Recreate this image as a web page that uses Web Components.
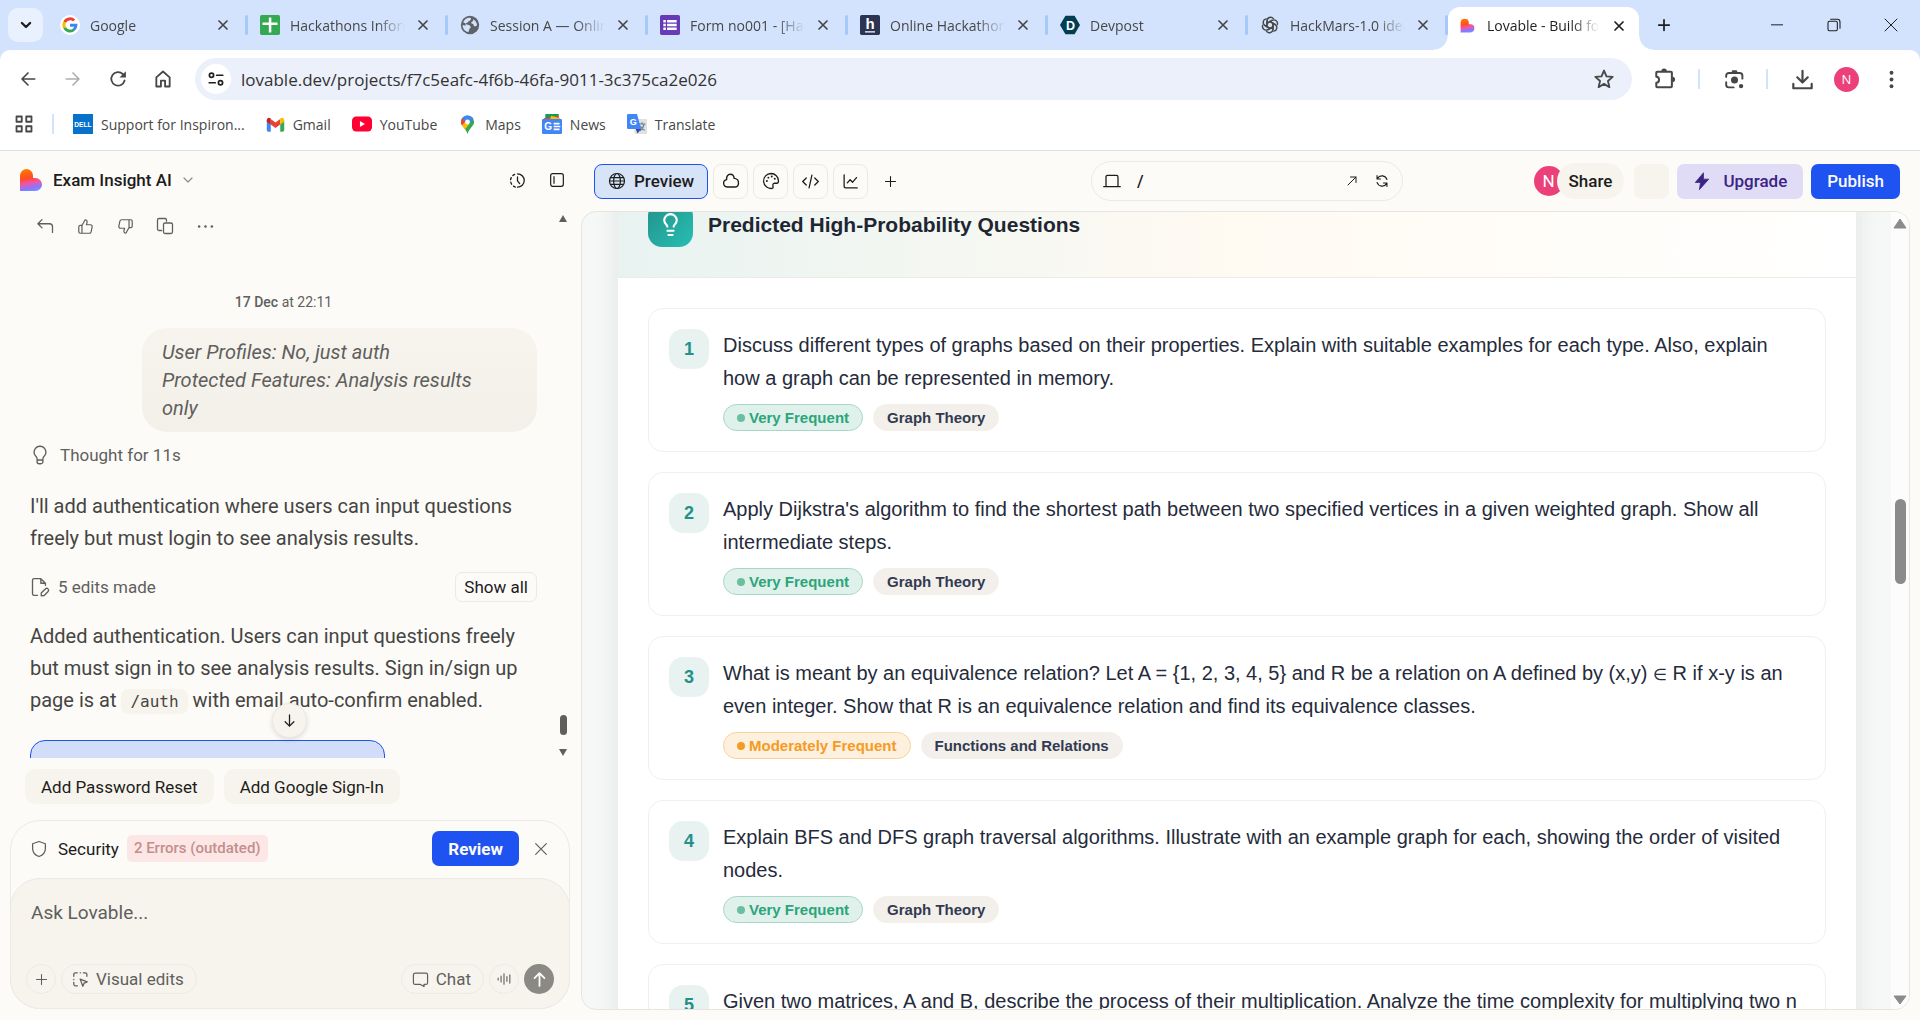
<!DOCTYPE html>
<html lang="en">
<head>
<meta charset="utf-8">
<title>Lovable - Build for the web 20x faster</title>
<style>
  html, body {
    margin: 0;
    height: 100%;
  }
  body {
    display: flex;
    flex-direction: column;
    overflow: hidden;
    background: #fcfbf8;
    font-family: Roboto, "Liberation Sans", sans-serif;
    color: #1c1c1c;
  }
  app-workspace {
    flex: 1;
    min-height: 0;
  }
</style>
</head>
<body>
<browser-tabs>
  <browser-tab icon="google" label="Google"></browser-tab>
  <browser-tab icon="sheets" label="Hackathons Information"></browser-tab>
  <browser-tab icon="globe-dark" label="Session A — Online Session"></browser-tab>
  <browser-tab icon="forms" label="Form no001 - [Hackathon]"></browser-tab>
  <browser-tab icon="hackerearth" label="Online Hackathons"></browser-tab>
  <browser-tab icon="devpost" label="Devpost"></browser-tab>
  <browser-tab icon="openai" label="HackMars-1.0 ideas"></browser-tab>
  <browser-tab icon="lovable" label="Lovable - Build for web" active></browser-tab>
</browser-tabs>
<browser-toolbar></browser-toolbar>
<bookmarks-bar></bookmarks-bar>
<app-workspace></app-workspace>

<script>
const line = (body, width = 2) =>
  `<g fill="none" stroke="currentColor" stroke-width="${width}" stroke-linecap="round" stroke-linejoin="round">${body}</g>`;

const lovableHeart = (id) => `
  <defs>
    <linearGradient id="${id}" x1="0.35" y1="0" x2="0.55" y2="1">
      <stop offset="0" stop-color="#ff7a00"/>
      <stop offset="0.4" stop-color="#ff4a26"/>
      <stop offset="0.62" stop-color="#f455a0"/>
      <stop offset="0.85" stop-color="#8a75ff"/>
      <stop offset="1" stop-color="#7b8cff"/>
    </linearGradient>
  </defs>
  <path fill="url(#${id})" d="M1 7.500a6.500 6.500 0 0 1 13 0V10h2.500a6.500 6.500 0 0 1 0 13H1z"/>`;

// all icons share a 24x24 grid
const ICONS = {
  'chevron-down': line('<path d="M4 8l8 8 8-8"/>', 2.4),
  'chevron-bold': line('<path d="M5 8.500l7 7 7-7"/>', 4),
  'close': line('<path d="M4 4l16 16M20 4L4 20"/>', 1.8),
  'close-bold': line('<path d="M4 4l16 16M20 4L4 20"/>', 3.400),
  'plus': line('<path d="M12 4v16M4 12h16"/>', 1.7),
  'plus-bold': line('<path d="M12 3v18M3 12h18"/>', 3),
  'minimize': '<path fill="currentColor" d="M3 11h18v1.500H3z"/>',
  'restore': line('<rect x="3" y="6.500" width="14" height="14" rx="2"/><path d="M7 3.500h10a4 4 0 0 1 4 4V17"/>', 1.6),
  'window-close': line('<path d="M3 3l18 18M21 3L3 21"/>', 1.5),
  'back': line('<path d="M21 12H4M12 4l-8 8 8 8"/>', 2.2),
  'forward': line('<path d="M3 12h17M12 4l8 8-8 8"/>', 2.2),
  'reload': line('<path d="M20.800 14A9 9 0 1 1 18.500 5.500L21 8"/>', 2.4) + '<path fill="currentColor" d="M22.500 1.500V10H14z"/>',
  'home': line('<path d="M4 21V10l8-7 8 7v11h-5.500v-7h-5v7z"/>', 2.2),
  'site-info': line('<circle cx="6" cy="7" r="2.800"/><path d="M13 7h8M3 17h8"/><circle cx="18" cy="17" r="2.800"/>', 2.3),
  'star': line('<path d="M12 2.800l2.700 6.300 6.800.6-5.200 4.500 1.600 6.700L12 17.300l-5.900 3.600 1.600-6.700L2.500 9.700l6.800-.6z"/>', 2),
  'extension': line('<path d="M3.500 4h15a1 1 0 0 1 1 1v15a1 1 0 0 1-1 1h-15a1 1 0 0 1-1-1v-4c2 0 3-1.300 3-3.200S4.500 9.500 2.500 9.500V5a1 1 0 0 1 1-1z"/>', 2.2) + '<path fill="currentColor" d="M8 3.500a3 3 0 0 1 6 0zM20 9.500a3 3 0 0 1 0 6z"/>',
  'lens': line('<path d="M2.500 9V7.500a3 3 0 0 1 3-3H18a3 3 0 0 1 3 3V11M2.500 15v3a3 3 0 0 0 3 3H11"/>', 2.2) + '<path fill="currentColor" d="M8.500 4l1-2.500h5l1 2.500z"/><circle fill="currentColor" cx="12" cy="12.500" r="4"/><circle fill="currentColor" cx="19.500" cy="19.500" r="2.500"/>',
  'download': line('<path d="M12 2v13M6 9.500l6 6 6-6M1.500 17v5h21v-5"/>', 2.5),
  'dots-vertical': '<g fill="currentColor"><circle cx="12" cy="3.500" r="2.400"/><circle cx="12" cy="12" r="2.400"/><circle cx="12" cy="20.500" r="2.400"/></g>',
  'apps': line('<rect x="2" y="2" width="7" height="7"/><rect x="15" y="2" width="7" height="7"/><rect x="2" y="15" width="7" height="7"/><rect x="15" y="15" width="7" height="7"/>', 2.4),

  'google': `<circle cx="12" cy="12" r="12" fill="#fff"/>
    <g fill="none" stroke-width="3.600">
      <path stroke="#ea4335" d="M17 6.600A7.200 7.200 0 0 0 5.600 8.600"/>
      <path stroke="#fbbc05" d="M5.700 8.400a7.200 7.200 0 0 0 0 7.200"/>
      <path stroke="#34a853" d="M5.600 15.400a7.200 7.200 0 0 0 11.200 2"/>
      <path stroke="#4285f4" d="M16.600 17.600a7 7 0 0 0 2.500-5.400H12"/>
    </g>`,
  'sheets': '<rect width="24" height="24" rx="2" fill="#34a853"/><path fill="#fff" d="M10.600 3h3v6H21v3h-7.400v9h-3v-9H3V9h7.600z"/>',
  'globe-dark': '<circle cx="12" cy="12" r="11" fill="#5f6368"/><path fill="#d3e3fd" d="M13 3.500c1 2-1 3-2.500 4S9 10 7 10c0 2 3 1.500 4.500 2.500s2 2.500.5 3.500-1 3.500-2 4.500C5 19.500 3 15.500 3.200 12l3.300 1 .5-2.500-3.200-2C5.500 5 9 2.500 13 3.500zM15.500 5c2.500 1 5 4 5 7.500-1.500.5-2 1.500-3.500 1-1-.5 0-2.500-2-3s-2-2-.5-2.500 1.500-1.500 1-3z"/>',
  'forms': '<rect width="24" height="24" rx="2" fill="#673ab7"/><path fill="#fff" d="M4 6h3v3H4zM8.500 6H20v3H8.500zM4 10.500h3v3H4zM8.500 10.500H20v3H8.500zM4 15h3v3H4zM8.500 15H20v3H8.500z"/>',
  'hackerearth': '<rect width="24" height="24" rx="2" fill="#2c3454"/><text x="12" y="16.500" text-anchor="middle" font-family="Liberation Sans" font-size="18" font-weight="700" fill="#fff">h</text><path fill="#fff" d="M6 19.500h12v1.500H6z"/>',
  'devpost': '<path fill="#003e54" d="M6.500 1h11L24 12l-6.500 11h-11L0 12z"/><text x="12.500" y="17.500" text-anchor="middle" font-family="Liberation Sans" font-size="15" font-weight="700" fill="#fff">D</text>',
  'openai': line([0, 60, 120, 180, 240, 300].map(a => `<path transform="rotate(${a} 12 12)" d="M8.500 14.200V7a4.300 4.300 0 0 1 7.600-2.700M8.500 9.700l5.800-3.400"/>`).join(''), 1.7),
  'lovable': lovableHeart('heart'),
  'dell': '<rect width="24" height="24" fill="#0672cb"/><text x="12" y="15" text-anchor="middle" font-family="Liberation Sans" font-size="8" font-weight="700" fill="#fff">DELL</text>',
  'gmail': '<path fill="#4285f4" d="M1 7v12a2 2 0 0 0 2 2h3V11z"/><path fill="#34a853" d="M23 7v12a2 2 0 0 1-2 2h-3V11z"/><path fill="#ea4335" d="M6 5v7l6 4.500 6-4.500V5l-6 4.500z"/><path fill="#c5221f" d="M1 6.500c0-3 3-4 5-2V12L1 8.500z"/><path fill="#fbbc04" d="M23 6.500c0-3-3-4-5-2V12l5-3.500z"/>',
  'youtube': '<rect y="3" width="24" height="18" rx="5" fill="#f03"/><path fill="#fff" d="M9.500 8.500v7l6-3.500z"/>',
  'maps': `<clipPath id="pin"><path d="M12 .5a8.300 8.300 0 0 1 8.300 8.300c0 5.200-6.300 7.700-8.300 15.200-2-7.500-8.300-10-8.300-15.200A8.300 8.300 0 0 1 12 .5z"/></clipPath>
    <g clip-path="url(#pin)">
      <path fill="#34a853" d="M0 0h24v24H0z"/>
      <path fill="#fbbc04" d="M3 15L9.500 6.500l5 5L7.500 20z"/>
      <path fill="#ea4335" d="M0 2l6 1.500 4 4L3.500 14.500 0 13z"/>
      <path fill="#4285f4" d="M5 4L9 0h11v4.500L14 11 9.500 8z"/>
    </g>
    <circle cx="12" cy="8.800" r="3.100" fill="#fff"/>`,
  'news': '<path fill="#0c9d58" d="M4 0h16v8H4z"/><path fill="#ea4335" d="M2 5l18-3 1 6H3z"/><path fill="#fbbc04" d="M11 2l11 3-1 4H9z"/><rect y="6" width="24" height="18" rx="1.500" fill="#4285f4"/><text x="7.500" y="19" text-anchor="middle" font-family="Liberation Sans" font-size="12" font-weight="700" fill="#fff">G</text><path fill="#fff" d="M14 10.500h7v2h-7zM14 14h8v2h-8zM14 17.500h7v2h-7z"/>',
  'translate': '<rect x="9" y="6" width="15" height="18" rx="1.500" fill="#e0e0e0"/><path d="M14 12h8M18 10v2M15.500 20c3-2 4.500-4.500 5-8M16 14.500c1 2 3 4 5 5" stroke="#607d8b" stroke-width="1.400" fill="none"/><path fill="#4285f4" d="M1.500 0H12l5 18H1.500A1.500 1.500 0 0 1 0 16.500v-15A1.500 1.500 0 0 1 1.500 0z"/><path fill="#3547b0" d="M10.500 18H17l-4.500 5.500z"/><text x="7.500" y="13" text-anchor="middle" font-family="Liberation Sans" font-size="11" font-weight="700" fill="#fff">G</text>',

  'history': line('<path d="M12 2.500a9.500 9.500 0 0 1 0 19M12 7v5.500l3 4"/><path stroke-dasharray="3 3.600" d="M9 21.200A9.500 9.500 0 0 1 9 3"/>', 1.8),
  'sidebar': line('<rect x="2.500" y="2.500" width="19" height="19" rx="3"/><path d="M7.500 7v10"/>', 1.8),
  'undo': line('<path d="M8 3.500L2.500 9 8 14.500M2.500 9H18a4 4 0 0 1 4 4v7.500"/>', 1.7),
  'thumb-up': line('<path d="M7 10.500v11H4.500a2 2 0 0 1-2-2v-7a2 2 0 0 1 2-2zM7 10.500l4.500-8a3 3 0 0 1 2.700 3.800L13.300 9.500H19a2.500 2.500 0 0 1 2.400 3l-1.500 7a2.500 2.500 0 0 1-2.400 2H7"/>', 1.7),
  'thumb-down': line('<path d="M17 13.500v-11h2.500a2 2 0 0 1 2 2v7a2 2 0 0 1-2 2zM17 13.500l-4.500 8a3 3 0 0 1-2.700-3.800l.9-3.200H5a2.500 2.500 0 0 1-2.400-3l1.500-7a2.500 2.500 0 0 1 2.400-2H17"/>', 1.7),
  'copy': line('<rect x="10" y="8" width="12" height="14" rx="2"/><path d="M7.500 18H4a2 2 0 0 1-2-2V4a2 2 0 0 1 2-2h8a2 2 0 0 1 2 2v1.500"/>', 1.7),
  'dots': '<g fill="currentColor"><circle cx="3" cy="12" r="1.800"/><circle cx="12" cy="12" r="1.800"/><circle cx="21" cy="12" r="1.800"/></g>',
  'bulb': line('<path d="M8.500 18v-1.500c0-1.500-.8-2.200-1.800-3.400A7 7 0 0 1 12 1.500a7 7 0 0 1 5.300 11.600c-1 1.200-1.800 1.900-1.800 3.400V18zM8.500 18v2a2.500 2.500 0 0 0 2.500 2.500h2a2.500 2.500 0 0 0 2.500-2.500v-2"/>', 1.6),
  'bulb-tile': line('<path d="M15 14c.2-1 .7-1.700 1.500-2.500A5.800 5.800 0 0 0 18 8 6 6 0 0 0 6 8c0 1 .2 2.200 1.500 3.500.7.700 1.300 1.500 1.500 2.500M9 18h6M10 22h4"/>', 2),
  'file-edit': line('<path d="M9 22H5a2 2 0 0 1-2-2V4a2 2 0 0 1 2-2h8l5.500 5.500V10M13 2v5.500h5.500"/><path d="M13.500 22.500v-3.200l5-5a2.200 2.200 0 0 1 3.200 3.100l-5 5z"/>', 1.6),
  'arrow-down': line('<path d="M12 3v18M5 14l7 7 7-7"/>', 2),
  'arrow-up': line('<path d="M12 21V3M5 10l7-7 7 7"/>', 2.6),
  'shield': line('<path d="M12 2l8.500 3v6.500c0 5-3.500 8.500-8.500 10.500-5-2-8.500-5.500-8.500-10.500V5z"/>', 1.7),
  'select': line('<path d="M2.500 7.500V5A2.500 2.500 0 0 1 5 2.500h2.500M16 2.500h2.500A2.500 2.500 0 0 1 21 5v2.500M2.500 16v2.500A2.500 2.500 0 0 0 5 21h2.500M11.500 2.500h.5M2.500 11.700v.5M11.500 11.500l10 3.800-4.300 1.800-1.900 4.400z"/>', 1.8),
  'chat': line('<path d="M4.500 3h15A2.500 2.500 0 0 1 22 5.500v11a2.500 2.500 0 0 1-2.500 2.500H17v3l-5-3H4.500A2.500 2.500 0 0 1 2 16.500v-11A2.500 2.500 0 0 1 4.500 3z"/>', 1.7),
  'wave': line('<path d="M2 10.500v3M7 7v10M12 3v18M17 8v8M22 5v14"/>', 1.9),
  'globe': line('<circle cx="12" cy="12" r="10"/><ellipse cx="12" cy="12" rx="4.500" ry="10"/><path d="M3.500 7.500h17M3.500 16.500h17M2 12h20"/>', 1.6),
  'cloud': line('<path d="M7 20a5 5 0 0 1-.8-9.900C5.500 6 8 3 11 3c3.200 0 5 2.400 5.200 5.500C20 8.500 22 11.500 22 14.500 22 17.500 20 20 17 20z"/>', 1.8),
  'palette': line('<path d="M12 2a10 10 0 1 0 1.500 19.900c2-.4 1.200-2.600 1-3.600-.4-2 .7-3.300 2.700-3.300h2.300c1.600 0 2.500-1 2.500-3A10 10 0 0 0 12 2z"/>', 1.7) + '<g fill="currentColor"><circle cx="6.500" cy="12" r="1.300"/><circle cx="8.500" cy="7.500" r="1.300"/><circle cx="13" cy="6" r="1.300"/><circle cx="17" cy="9" r="1.300"/></g>',
  'code': line('<path d="M6 7l-5 5 5 5M18 7l5 5-5 5M14 3l-4 18"/>', 1.8),
  'chart': line('<path d="M3 2.500V19a2 2 0 0 0 2 2h16.500M7.500 14l4-4.500 3.500 3.500 5.500-6.500"/>', 1.8),
  'laptop': line('<path d="M4 19V6.500a2 2 0 0 1 2-2h12a2 2 0 0 1 2 2V19M1 19.500h22"/>', 1.7),
  'arrow-out': line('<path d="M4 20L20 4M9 4h11v11"/>', 2),
  'refresh': line('<path d="M20.500 9.500A9 9 0 0 0 4.200 7.500M3.500 2.500v6h6M3.500 14.500a9 9 0 0 0 16.300 2M20.500 21.500v-6h-6"/>', 1.9),
  'bolt': '<path fill="currentColor" stroke="currentColor" stroke-linejoin="round" d="M14 1L3 14h7l-1.500 9.500L21 9.500h-7z"/>'
};

class UiIcon extends HTMLElement {
  connectedCallback() {
    const size = this.getAttribute('size') || 20;
    this.attachShadow({ mode: 'open' });
    this.shadowRoot.innerHTML = `
      <style>
        :host { display: inline-flex; flex: none; }
        svg { display: block; overflow: visible; }
      </style>
      <svg width="${size}" height="${size}" viewBox="0 0 24 24" aria-hidden="true">${ICONS[this.getAttribute('name')] || ''}</svg>
    `;
  }
}
customElements.define('ui-icon', UiIcon);

// shared reset for buttons and inputs inside each shadow root
const RESET = `
  *, *::before { box-sizing: border-box; }
  button {
    display: inline-flex;
    align-items: center;
    justify-content: center;
    margin: 0;
    padding: 0;
    border: 0;
    background: none;
    color: inherit;
    font: inherit;
    white-space: nowrap;
    cursor: pointer;
  }
  input, textarea {
    min-width: 0;
    margin: 0;
    padding: 0;
    border: 0;
    outline: 0;
    background: none;
    font: inherit;
    color: inherit;
  }
`;

class BrowserTabs extends HTMLElement {
  connectedCallback() {
    this.attachShadow({ mode: 'open' });
    this.shadowRoot.innerHTML = `
      <style>
        ${RESET}
        :host {
          display: flex;
          height: 50px;
          padding-left: 8px;
          box-sizing: border-box;
          background: #d3e3fd;
          color: #1f1f1f;
          font-family: "Open Sans", sans-serif;
        }
        .search {
          width: 35px;
          height: 34px;
          margin: 8px 5px 0 0;
          border-radius: 10px;
          background: #e9f0fe;
        }
        .tabs { display: flex; }
        .new { width: 36px; height: 50px; margin-left: 7px; }
        .controls { display: flex; margin-left: auto; padding-right: 1px; }
        .controls button { width: 57px; height: 50px; }
      </style>
      <button class="search" aria-label="Search tabs"><ui-icon name="chevron-bold" size="14"></ui-icon></button>
      <div class="tabs"><slot></slot></div>
      <button class="new" aria-label="New tab"><ui-icon name="plus-bold" size="14"></ui-icon></button>
      <div class="controls">
        <button aria-label="Minimise"><ui-icon name="minimize" size="16"></ui-icon></button>
        <button aria-label="Restore"><ui-icon name="restore" size="16"></ui-icon></button>
        <button aria-label="Close window"><ui-icon name="window-close" size="16"></ui-icon></button>
      </div>
    `;
  }
}
customElements.define('browser-tabs', BrowserTabs);

class BrowserTab extends HTMLElement {
  connectedCallback() {
    this.attachShadow({ mode: 'open' });
    this.shadowRoot.innerHTML = `
      <style>
        ${RESET}
        :host {
          position: relative;
          display: flex;
          align-items: center;
          width: 200px;
          height: 50px;
          padding: 0 15px 0 12px;
          box-sizing: border-box;
          color: #474747;
        }
        :host(:not([active]))::after {
          content: "";
          width: 3px;
          height: 20px;
          border-radius: 2px;
          background: #a8c7fa;
          margin: 0 -15px 0 12px;
        }
        .label {
          flex: 1;
          min-width: 0;
          margin: 0 8px 0 10px;
          overflow: hidden;
          white-space: nowrap;
          font-size: 14px;
          -webkit-mask-image: linear-gradient(90deg, #000 75%, transparent);
          mask-image: linear-gradient(90deg, #000 75%, transparent);
        }
        button { width: 20px; height: 20px; }
        :host([active]) {
          width: 191px;
          height: 43px;
          margin-top: 7px;
          padding: 0 10px 6px 12px;
          border-radius: 12px 12px 0 0;
          background: #fff;
          color: #1f1f1f;
        }
        :host([active]) .label { margin: 0 10px 0 12px; }
        .curve { display: none; }
        :host([active]) .curve {
          display: block;
          position: absolute;
          bottom: 0;
          width: 14px;
          height: 14px;
        }
        .left { right: 100%; background: radial-gradient(circle at 0 0, transparent 13px, #fff 14px); }
        .right { left: 100%; background: radial-gradient(circle at 100% 0, transparent 13px, #fff 14px); }
      </style>
      <span class="curve left"></span>
      <ui-icon name="${this.getAttribute('icon')}" size="${this.hasAttribute('active') ? 15 : 20}"></ui-icon>
      <span class="label">${this.getAttribute('label')}</span>
      <button aria-label="Close tab"><ui-icon name="close-bold" size="12"></ui-icon></button>
      <span class="curve right"></span>
    `;
  }
}
customElements.define('browser-tab', BrowserTab);

class BrowserToolbar extends HTMLElement {
  connectedCallback() {
    this.attachShadow({ mode: 'open' });
    this.shadowRoot.innerHTML = `
      <style>
        ${RESET}
        :host {
          display: block;
          background: #d3e3fd;
          color: #474747;
          font-family: "Open Sans", sans-serif;
        }
        .bar {
          display: flex;
          align-items: center;
          height: 50px;
          padding: 8px 6px 0 5px;
          border-radius: 10px 10px 0 0;
          background: #fff;
        }
        .nav { display: flex; }
        .nav button { width: 45px; height: 42px; }
        .nav button[disabled] { color: #aeaeae; }
        .omnibox {
          display: flex;
          flex: 1;
          align-items: center;
          height: 42px;
          margin-left: 10px;
          padding: 0 17px 0 6px;
          border-radius: 21px;
          background: #ebf0fa;
        }
        .info {
          width: 30px;
          height: 30px;
          border-radius: 50%;
          background: #fff;
          color: #1f1f1f;
        }
        input { flex: 1; margin-left: 10px; font-size: 17px; color: #333; }
        .divider { width: 2px; height: 20px; background: #d3e3fd; }
        .actions { display: flex; align-items: center; }
        .actions button { width: 45px; height: 42px; }
        .actions .ext { width: 66px; }
        .actions .lens { width: 66px; padding-left: 2px; }
        .actions .downloads { width: 56px; padding-left: 12px; }
        .avatar span {
          width: 25px;
          height: 25px;
          border-radius: 50%;
          background: #ec407a;
          color: #fff;
          font-size: 13px;
          line-height: 25px;
        }
      </style>
      <div class="bar">
        <div class="nav">
          <button aria-label="Back"><ui-icon name="back" size="18"></ui-icon></button>
          <button aria-label="Forward" disabled><ui-icon name="forward" size="18"></ui-icon></button>
          <button aria-label="Reload"><ui-icon name="reload" size="18"></ui-icon></button>
          <button aria-label="Home"><ui-icon name="home" size="20"></ui-icon></button>
        </div>
        <div class="omnibox">
          <button class="info" aria-label="Site information"><ui-icon name="site-info" size="18"></ui-icon></button>
          <input type="text" aria-label="Address" value="lovable.dev/projects/f7c5eafc-4f6b-46fa-9011-3c375ca2e026">
          <button aria-label="Bookmark this tab"><ui-icon name="star" size="22"></ui-icon></button>
        </div>
        <div class="actions">
          <button class="ext" aria-label="Extensions"><ui-icon name="extension" size="22"></ui-icon></button>
          <span class="divider"></span>
          <button class="lens" aria-label="Search with Google Lens"><ui-icon name="lens" size="21"></ui-icon></button>
          <span class="divider"></span>
          <button class="downloads" aria-label="Downloads"><ui-icon name="download" size="21"></ui-icon></button>
          <button class="avatar" aria-label="Profile"><span>N</span></button>
          <button aria-label="Menu"><ui-icon name="dots-vertical" size="19"></ui-icon></button>
        </div>
      </div>
    `;
  }
}
customElements.define('browser-toolbar', BrowserToolbar);

class BookmarksBar extends HTMLElement {
  connectedCallback() {
    this.attachShadow({ mode: 'open' });
    this.shadowRoot.innerHTML = `
      <style>
        ${RESET}
        :host {
          display: flex;
          align-items: center;
          height: 51px;
          padding: 0 0 2px 15px;
          box-sizing: border-box;
          border-bottom: 1px solid #dde3de;
          background: #fff;
          color: #474747;
          font-family: "Open Sans", sans-serif;
          font-size: 14px;
        }
        .divider { width: 2px; height: 20px; margin: 0 19px; background: #d3e3fd; }
        nav { display: flex; gap: 21px; }
        a {
          display: flex;
          align-items: center;
          gap: 8px;
          color: inherit;
          text-decoration: none;
        }
      </style>
      <button aria-label="Apps"><ui-icon name="apps" size="18"></ui-icon></button>
      <span class="divider"></span>
      <nav>
        <a href="#"><ui-icon name="dell" size="20"></ui-icon>Support for Inspiron...</a>
        <a href="#"><ui-icon name="gmail" size="19"></ui-icon>Gmail</a>
        <a href="#"><ui-icon name="youtube" size="20"></ui-icon>YouTube</a>
        <a href="#"><ui-icon name="maps" size="19"></ui-icon>Maps</a>
        <a href="#"><ui-icon name="news" size="20"></ui-icon>News</a>
        <a href="#"><ui-icon name="translate" size="20"></ui-icon>Translate</a>
      </nav>
    `;
  }
}
customElements.define('bookmarks-bar', BookmarksBar);

class AppWorkspace extends HTMLElement {
  connectedCallback() {
    this.attachShadow({ mode: 'open' });
    this.shadowRoot.innerHTML = `
      <style>
        :host {
          display: grid;
          grid-template-columns: 580px minmax(0, 1fr);
          grid-template-rows: minmax(0, 1fr);
        }
        main {
          display: flex;
          flex-direction: column;
          min-height: 0;
          padding: 0 10px 10px 1px;
        }
        preview-pane { flex: 1; min-height: 0; }
      </style>
      <chat-panel></chat-panel>
      <main>
        <preview-toolbar></preview-toolbar>
        <preview-pane></preview-pane>
      </main>
    `;
  }
}
customElements.define('app-workspace', AppWorkspace);

class ChatPanel extends HTMLElement {
  connectedCallback() {
    this.attachShadow({ mode: 'open' });
    this.shadowRoot.innerHTML = `
      <style>
        ${RESET}
        :host {
          display: flex;
          flex-direction: column;
          min-height: 0;
          color: #5f5f5d;
        }
        header {
          display: flex;
          align-items: center;
          height: 60px;
          padding: 0 3px 2px 19px;
          flex: none;
        }
        .project { gap: 10px; color: #1c1c1c; font-size: 17px; font-weight: 500; }
        .project ui-icon:last-child { color: #8a8a86; }
        .tools { display: flex; margin-left: auto; color: #1c1c1c; }
        .tools button { width: 40px; height: 40px; }
        .scroller {
          position: relative;
          display: flex;
          flex: 1;
          min-height: 0;
          overflow: hidden;
        }
        .log {
          flex: 1;
          min-width: 0;
          padding: 0 19px 0 30px;
        }
        .actions { display: flex; margin-left: -5px; }
        .actions button { width: 40px; height: 30px; }
        .date {
          margin: 51px 0 0;
          text-align: center;
          font-size: 14px;
          line-height: 20px;
        }
        .date b { font-weight: 500; }
        .bubble {
          margin: 16px 0 0 112px;
          padding: 10px 30px 10px 20px;
          border-radius: 25px;
          background: linear-gradient(#f7f4ed, #f3f0e9);
          font-size: 20px;
          line-height: 28px;
          font-style: italic;
        }
        .note {
          display: flex;
          align-items: center;
          gap: 10px;
          font-size: 17px;
          line-height: 20px;
        }
        .thought { margin-top: 13px; }
        .edits { margin-top: 18px; gap: 8px; }
        .edits button {
          height: 30px;
          margin-left: auto;
          padding: 0 8px;
          border: 1px solid #eceae4;
          border-radius: 7px;
          color: #1c1c1c;
        }
        p.text {
          margin: 18px 0 0;
          font-size: 20px;
          line-height: 32px;
          color: #454543;
        }
        .thought + p.text { margin-top: 25px; }
        code {
          padding: 3px 9px;
          border-radius: 7px;
          background: #f7f4ed;
          font-family: "DejaVu Sans Mono", "Liberation Mono", monospace;
          font-size: 16px;
        }
        .version {
          width: 70%;
          height: 80px;
          margin-top: 22px;
          border: 1px solid #1e52f1;
          border-radius: 15px;
          background: #d2ddf9;
        }
        .jump {
          position: absolute;
          left: 50%;
          bottom: 20px;
          width: 35px;
          height: 35px;
          margin-left: -18px;
          border: 1px solid #eceae4;
          border-radius: 50%;
          background: #f7f4ed;
          color: #1c1c1c;
          box-shadow: 0 2px 5px rgba(0, 0, 0, 0.12);
        }
        .scrollbar {
          display: flex;
          flex-direction: column;
          align-items: center;
          width: 14px;
          margin-right: 10px;
          padding: 4px 0 2px;
        }
        .thumb {
          width: 7px;
          height: 20px;
          margin: auto 0 14px;
          border-radius: 4px;
          background: #5f5f5d;
        }
      </style>
      <header>
        <button class="project">
          <ui-icon name="lovable" size="24"></ui-icon>Exam Insight AI<ui-icon name="chevron-down" size="12"></ui-icon>
        </button>
        <div class="tools">
          <button aria-label="History"><ui-icon name="history" size="17"></ui-icon></button>
          <button aria-label="Collapse sidebar"><ui-icon name="sidebar" size="16"></ui-icon></button>
        </div>
      </header>
      <div class="scroller">
        <div class="log">
          <div class="actions">
            <button aria-label="Revert"><ui-icon name="undo" size="18"></ui-icon></button>
            <button aria-label="Helpful"><ui-icon name="thumb-up" size="17"></ui-icon></button>
            <button aria-label="Not helpful"><ui-icon name="thumb-down" size="17"></ui-icon></button>
            <button aria-label="Copy"><ui-icon name="copy" size="18"></ui-icon></button>
            <button aria-label="More"><ui-icon name="dots" size="17"></ui-icon></button>
          </div>
          <p class="date"><b>17 Dec</b> at 22:11</p>
          <div class="bubble">User Profiles: No, just auth<br>Protected Features: Analysis results only</div>
          <div class="note thought"><ui-icon name="bulb" size="20"></ui-icon>Thought for 11s</div>
          <p class="text">I'll add authentication where users can input questions freely but must login to see analysis results.</p>
          <div class="note edits"><ui-icon name="file-edit" size="20"></ui-icon>5 edits made<button>Show all</button></div>
          <p class="text">Added authentication. Users can input questions freely but must sign in to see analysis results. Sign in/sign up page is at <code>/auth</code> with email auto-confirm enabled.</p>
          <div class="version"></div>
        </div>
        <div class="scrollbar">
          <svg width="8" height="7"><path fill="#5f5f5d" d="M4 0l4 7H0z"/></svg>
          <span class="thumb"></span>
          <svg width="8" height="7"><path fill="#5f5f5d" d="M4 7L0 0h8z"/></svg>
        </div>
        <button class="jump" aria-label="Scroll to bottom"><ui-icon name="arrow-down" size="15"></ui-icon></button>
      </div>
      <chat-composer></chat-composer>
    `;
  }
}
customElements.define('chat-panel', ChatPanel);

class ChatComposer extends HTMLElement {
  connectedCallback() {
    this.attachShadow({ mode: 'open' });
    this.shadowRoot.innerHTML = `
      <style>
        ${RESET}
        :host {
          display: block;
          padding: 11px 10px 11px;
          font-size: 17px;
          color: #1c1c1c;
        }
        .suggestions { display: flex; gap: 10px; margin: 0 0 16px 15px; }
        .suggestions button {
          height: 35px;
          padding: 0 16px;
          border-radius: 10px;
          background: #f7f4ed;
        }
        .box {
          border: 1px solid #eceae4;
          border-radius: 30px;
        }
        .security {
          display: flex;
          align-items: center;
          height: 57px;
          padding: 0 16px 2px 19px;
        }
        .security > ui-icon { color: #5f5f5d; margin-right: 10px; }
        .badge {
          margin-left: 8px;
          padding: 0 7px;
          border-radius: 5px;
          background: #fce7e6;
          color: #c48e8c;
          font-size: 15px;
          font-weight: 500;
          line-height: 27px;
        }
        .review {
          height: 35px;
          margin-left: auto;
          padding: 0 16px;
          border-radius: 7px;
          background: #1e52f1;
          color: #fcfbf8;
          font-weight: 700;
        }
        .dismiss { width: 24px; height: 24px; margin-left: 10px; color: #5f5f5d; }
        form {
          margin: 0 -1px -1px;
          padding: 18px 15px 14px;
          border: 1px solid #eceae4;
          border-radius: 30px;
          background: #f7f4ed;
          color: #5f5f5d;
        }
        textarea {
          display: block;
          width: 100%;
          height: 67px;
          padding: 0 5px;
          resize: none;
          font-size: 19px;
          line-height: 32px;
        }
        textarea::placeholder { color: #5f5f5d; opacity: 1; }
        .row { display: flex; gap: 5px; align-items: center; }
        .row button {
          height: 30px;
          min-width: 30px;
          gap: 7px;
          border: 1px solid #eceae4;
          border-radius: 15px;
        }
        .row .wide { padding: 0 12px 0 10px; }
        .row .push { margin-left: auto; }
        .row .send { border: 0; background: #8a8984; color: #fcfbf8; }
      </style>
      <div class="suggestions">
        <button>Add Password Reset</button>
        <button>Add Google Sign-In</button>
      </div>
      <div class="box">
        <div class="security">
          <ui-icon name="shield" size="18"></ui-icon>
          <span>Security</span><span class="badge">2 Errors (outdated)</span>
          <button class="review">Review</button>
          <button class="dismiss" aria-label="Dismiss"><ui-icon name="close" size="16"></ui-icon></button>
        </div>
        <form>
          <textarea aria-label="Message" placeholder="Ask Lovable..."></textarea>
          <div class="row">
            <button type="button" aria-label="Attach"><ui-icon name="plus" size="15"></ui-icon></button>
            <button type="button" class="wide"><ui-icon name="select" size="17"></ui-icon>Visual edits</button>
            <button type="button" class="wide push"><ui-icon name="chat" size="17"></ui-icon>Chat</button>
            <button type="button" aria-label="Voice"><ui-icon name="wave" size="14"></ui-icon></button>
            <button type="button" class="send" aria-label="Send"><ui-icon name="arrow-up" size="17"></ui-icon></button>
          </div>
        </form>
      </div>
    `;
  }
}
customElements.define('chat-composer', ChatComposer);

class PreviewToolbar extends HTMLElement {
  connectedCallback() {
    this.attachShadow({ mode: 'open' });
    this.shadowRoot.innerHTML = `
      <style>
        ${RESET}
        :host {
          display: grid;
          grid-template-columns: 1fr 312px 1fr;
          align-items: center;
          height: 60px;
          flex: none;
          padding: 0 10px 0 13px;
          font-size: 17px;
          font-weight: 500;
          color: #1c1c1c;
        }
        .views, .account { display: flex; align-items: center; gap: 5px; }
        .views button {
          width: 35px;
          height: 35px;
          border: 1px solid #eceae4;
          border-radius: 8px;
        }
        .views .current {
          width: auto;
          padding: 0 13px;
          gap: 8px;
          border-color: #1e52f1;
          background: #d7e4f8;
        }
        .views .add { border: 0; }
        .address {
          display: flex;
          align-items: center;
          height: 40px;
          padding: 0 5px 0 11px;
          border: 1px solid #eceae4;
          border-radius: 20px;
        }
        .address input { flex: 1; margin-left: 16px; }
        .address button { width: 30px; height: 30px; }
        .account { justify-content: flex-end; gap: 8px; }
        .people { display: flex; align-items: center; margin-right: 2px; }
        .avatar {
          width: 30px;
          height: 30px;
          margin-right: -7px;
          border-radius: 50%;
          background: #ec407a;
          color: #fff;
          font-size: 17px;
          font-weight: 400;
          line-height: 30px;
          text-align: center;
        }
        .share {
          position: relative;
          height: 36px;
          padding: 0 12px;
          border-radius: 18px;
          background: #f7f4ed;
        }
        .blank { width: 35px; height: 35px; border-radius: 8px; background: #f7f4ed; }
        .upgrade {
          height: 35px;
          padding: 0 16px;
          gap: 12px;
          border-radius: 7px;
          background: #e1dcf6;
          color: #3b2483;
        }
        .publish {
          height: 35px;
          padding: 0 16px;
          border-radius: 7px;
          background: #1e52f1;
          color: #fcfbf8;
        }
      </style>
      <div class="views">
        <button class="current"><ui-icon name="globe" size="18"></ui-icon>Preview</button>
        <button aria-label="Cloud"><ui-icon name="cloud" size="18"></ui-icon></button>
        <button aria-label="Design"><ui-icon name="palette" size="18"></ui-icon></button>
        <button aria-label="Code"><ui-icon name="code" size="17"></ui-icon></button>
        <button aria-label="Analytics"><ui-icon name="chart" size="17"></ui-icon></button>
        <button class="add" aria-label="Add"><ui-icon name="plus" size="15"></ui-icon></button>
      </div>
      <div class="address">
        <ui-icon name="laptop" size="18"></ui-icon>
        <input type="text" aria-label="Preview path" value="/">
        <button aria-label="Open in new tab"><ui-icon name="arrow-out" size="12"></ui-icon></button>
        <button aria-label="Refresh preview"><ui-icon name="refresh" size="14"></ui-icon></button>
      </div>
      <div class="account">
        <div class="people"><span class="avatar">N</span><button class="share">Share</button></div>
        <button class="blank" aria-label="Integrations"></button>
        <button class="upgrade"><ui-icon name="bolt" size="18"></ui-icon>Upgrade</button>
        <button class="publish">Publish</button>
      </div>
    `;
  }
}
customElements.define('preview-toolbar', PreviewToolbar);

class PreviewPane extends HTMLElement {
  connectedCallback() {
    this.attachShadow({ mode: 'open' });
    this.shadowRoot.innerHTML = `
      <style>
        :host {
          display: flex;
          box-sizing: border-box;
          overflow: hidden;
          border: 1px solid #e6e5df;
          border-radius: 15px;
          background: #f5f8f7;
          font-family: "Liberation Sans", Arial, sans-serif;
          color: #252b3b;
        }
        .page { flex: 1; min-width: 0; padding: 0 35px 0 36px; }
        /* page is scrolled past the top of this section */
        section {
          margin-top: -40px;
          background: #fff;
          box-shadow: 0 0 22px rgba(40, 50, 50, 0.1);
        }
        header {
          display: flex;
          align-items: center;
          gap: 15px;
          padding: 30px;
          border-bottom: 1px solid #ecebe7;
          background: linear-gradient(90deg, #e8f3f1, #fffaf2 50%, #fff);
        }
        .tile {
          display: flex;
          align-items: center;
          justify-content: center;
          width: 45px;
          height: 45px;
          border-radius: 14px;
          background: linear-gradient(135deg, #23918a, #26bfb3);
          color: #fff;
        }
        h2 { margin: 0; font-size: 21px; line-height: 30px; color: #1f2633; }
        ol {
          display: flex;
          flex-direction: column;
          gap: 20px;
          margin: 0;
          padding: 30px;
          list-style: none;
        }
        .math { font-size: 16px; line-height: 1; }
        .scrollbar {
          display: flex;
          flex-direction: column;
          align-items: center;
          width: 18px;
          padding: 6px 0 4px;
          box-sizing: border-box;
          background: #fcfcfc;
        }
        .scrollbar svg { flex: none; }
        .before { flex: 270; }
        .thumb { width: 11px; height: 85px; border-radius: 6px; background: #8b8b8b; }
        .after { flex: 410; }
      </style>
      <div class="page">
        <section>
          <header>
            <span class="tile"><ui-icon name="bulb-tile" size="25"></ui-icon></span>
            <h2>Predicted High-Probability Questions</h2>
          </header>
          <ol>
            <question-card number="1" level="very" topic="Graph Theory">Discuss different types of graphs based on their properties. Explain with suitable examples for each type. Also, explain how a graph can be represented in memory.</question-card>
            <question-card number="2" level="very" topic="Graph Theory">Apply Dijkstra's algorithm to find the shortest path between two specified vertices in a given weighted graph. Show all intermediate steps.</question-card>
            <question-card number="3" level="moderate" topic="Functions and Relations">What is meant by an equivalence relation? Let A = {1, 2, 3, 4, 5} and R be a relation on A defined by (x,y) <span class="math">∈</span> R if x-y is an even integer. Show that R is an equivalence relation and find its equivalence classes.</question-card>
            <question-card number="4" level="very" topic="Graph Theory">Explain BFS and DFS graph traversal algorithms. Illustrate with an example graph for each, showing the order of visited nodes.</question-card>
            <question-card number="5" level="very" topic="Matrices">Given two matrices, A and B, describe the process of their multiplication. Analyze the time complexity for multiplying two n x n matrices.</question-card>
          </ol>
        </section>
      </div>
      <div class="scrollbar">
        <svg width="14" height="11"><path fill="#8b8b8b" d="M7 1l6 9H1z" stroke="#8b8b8b" stroke-linejoin="round"/></svg>
        <span class="before"></span><span class="thumb"></span><span class="after"></span>
        <svg width="14" height="10"><path fill="#8b8b8b" d="M7 9L1 1h12z" stroke="#8b8b8b" stroke-linejoin="round"/></svg>
      </div>
    `;
  }
}
customElements.define('preview-pane', PreviewPane);

class QuestionCard extends HTMLElement {
  connectedCallback() {
    const level = this.getAttribute('level');
    this.setAttribute('role', 'listitem');
    this.attachShadow({ mode: 'open' });
    this.shadowRoot.innerHTML = `
      <style>
        :host {
          display: flex;
          gap: 14px;
          padding: 20px;
          border: 1px solid #efefed;
          border-radius: 15px;
          background: #fff;
        }
        .number {
          flex: none;
          width: 40px;
          height: 40px;
          border-radius: 14px;
          background: #e8f3f1;
          color: #23918a;
          font-size: 18px;
          font-weight: 700;
          line-height: 40px;
          text-align: center;
        }
        p { margin: 0; font-size: 20px; line-height: 33px; }
        .tags { display: flex; gap: 10px; margin-top: 9px; }
        .tag {
          display: flex;
          align-items: center;
          gap: 4px;
          padding: 0 13px;
          border: 1px solid #f3f0ec;
          border-radius: 14px;
          background: #f3f0ec;
          color: #323a50;
          font-size: 15px;
          font-weight: 700;
          line-height: 25px;
        }
        .very { border-color: #a5d9c5; background: #dff1ea; color: #2ba57b; }
        .moderate { border-color: #fbd19a; background: #fef0de; color: #f59b23; }
        .very::before, .moderate::before {
          content: "";
          width: 8px;
          height: 8px;
          border-radius: 50%;
          background: #6bbfa1;
        }
        .moderate::before { background: #f59b23; }
      </style>
      <span class="number">${this.getAttribute('number')}</span>
      <div>
        <p><slot></slot></p>
        <div class="tags">
          <span class="tag ${level}">${level === 'very' ? 'Very Frequent' : 'Moderately Frequent'}</span>
          <span class="tag">${this.getAttribute('topic')}</span>
        </div>
      </div>
    `;
  }
}
customElements.define('question-card', QuestionCard);
</script>
</body>
</html>
